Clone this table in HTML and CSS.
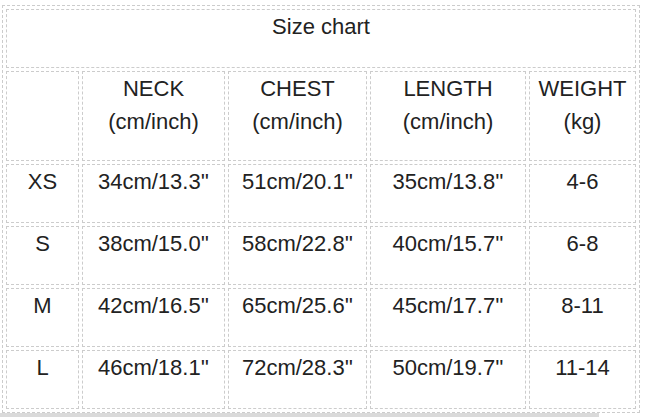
FILE: index.html
```html
<!DOCTYPE html>
<html>
<head>
<meta charset="utf-8">
<link rel="stylesheet" href="styles.css">
</head>
<body>
<div class="wrap">
<table class="chart">
  <colgroup>
    <col class="c1"><col class="c2"><col class="c3"><col class="c4"><col class="c5">
  </colgroup>
  <tr class="r-title"><td colspan="5">Size chart</td></tr>
  <tr class="r-head">
    <td></td>
    <td>NECK<br>(cm/inch)</td>
    <td>CHEST<br>(cm/inch)</td>
    <td>LENGTH<br>(cm/inch)</td>
    <td>WEIGHT<br>(kg)</td>
  </tr>
  <tr class="r-row"><td>XS</td><td>34cm/13.3''</td><td>51cm/20.1''</td><td>35cm/13.8''</td><td>4-6</td></tr>
  <tr class="r-row"><td>S</td><td>38cm/15.0''</td><td>58cm/22.8''</td><td>40cm/15.7''</td><td>6-8</td></tr>
  <tr class="r-row"><td>M</td><td>42cm/16.5''</td><td>65cm/25.6''</td><td>45cm/17.7''</td><td>8-11</td></tr>
  <tr class="r-row"><td>L</td><td>46cm/18.1''</td><td>72cm/28.3''</td><td>50cm/19.7''</td><td>11-14</td></tr>
</table>
<div class="scroll"></div>
</div>
</body>
</html>
```

FILE: styles.css
```css
html, body {
  margin: 0;
  padding: 0;
  background: #ffffff;
}
.wrap {
  padding: 5px 0 0 2px;
}
.chart {
  border: 1px dashed #cccccc;
  border-collapse: separate;
  border-spacing: 3px;
  width: 638px;
  table-layout: fixed;
  font-family: "Liberation Sans", Arial, sans-serif;
  font-size: 22px;
  line-height: 33px;
  color: #222222;
}
.c1 { width: 73px; }
.c2 { width: 143px; }
.c3 { width: 139px; }
.c4 { width: 156px; }
.c5 { width: 107px; }
.chart td {
  border: 1px dashed #cccccc;
  text-align: center;
  vertical-align: top;
  padding: 0 0 24px 0;
  white-space: nowrap;
}
.r-head td {
  padding-bottom: 22px;
}
.scroll {
  margin-top: 0;
  width: 599px;
  height: 5px;
  margin-left: -2px;
  background: #dadada;
}
```
